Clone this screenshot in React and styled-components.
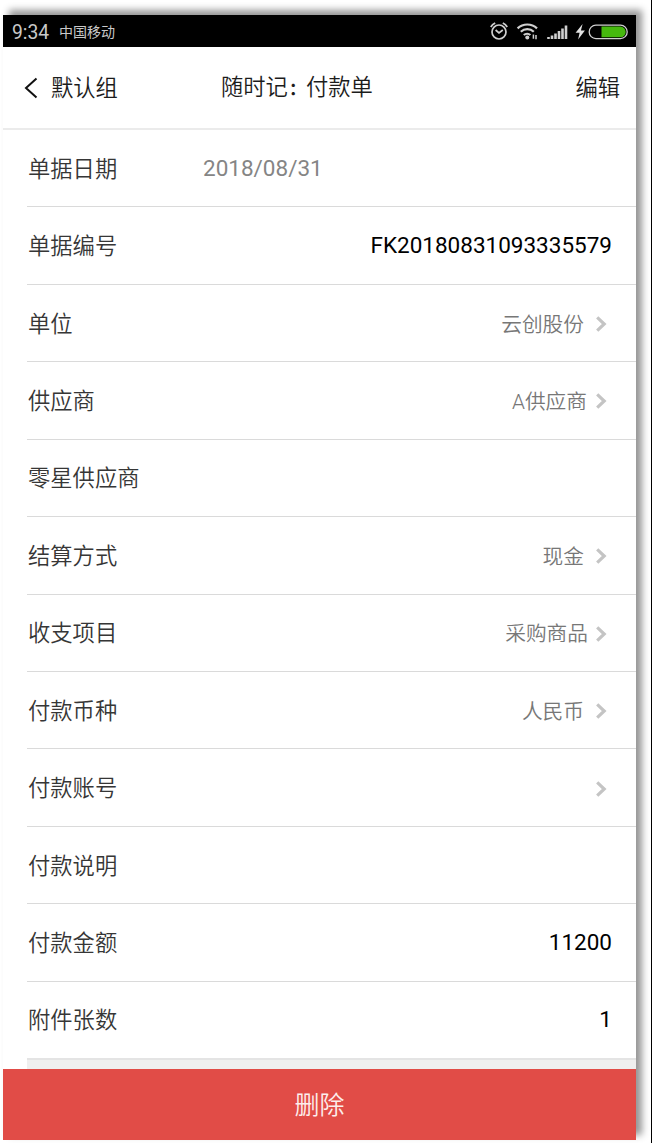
import React from 'react';
import styled, { createGlobalStyle } from 'styled-components';

const GlobalStyle = createGlobalStyle`
  body {
    margin: 0;
    background: #fff;
  }
  * {
    box-sizing: border-box;
  }
`

const Page = styled.div`
  width: 652px;
  height: 1143px;
  padding: 15px 0 0 3px;
  border-right: 1px solid #000;
  overflow: hidden;
  font-family: Roboto, "Noto Sans CJK SC", sans-serif;
`

const Phone = styled.div`
  display: flex;
  flex-direction: column;
  width: 633px;
  height: 1125px;
  background: #fff;
  box-shadow: 6px -5px 7px #969696;
`

const StatusBar = styled.div`
  display: flex;
  align-items: center;
  height: 32px;
  padding: 2px 7px 0 9px;
  background: #000;
  color: #c9c9c9;
`

const Time = styled.span`
  width: 47px;
  padding-top: 1px;
  font-size: 19.3px;
  line-height: 28px;
`

const Carrier = styled.span`
  flex: 1;
  font-size: 14px;
  line-height: 28px;
`

const StatusIcons = styled.svg`
  display: block;
  width: 142px;
  height: 24px;
  margin-bottom: 2px;
`

const Header = styled.div`
  display: grid;
  grid-template-columns: 198px 1fr auto;
  align-items: center;
  height: 83px;
  padding: 0 16px 0 20px;
  border-bottom: 2px solid #ebebeb;
  color: #1c1c1c;
  font-size: 22.3px;
  font-weight: 350;
  line-height: 32px;
`

const Back = styled.div`
  display: flex;
  align-items: center;
  padding-top: 1px;

  svg {
    margin-right: 12px;
  }
`

const Colon = styled.span`
  padding-left: 1px;
  font-size: 17px;
  font-weight: 700;
`

const List = styled.div`
  display: flex;
  flex-direction: column;
  height: 928px;
  padding-left: 24px;
`

const Row = styled.div`
  display: flex;
  flex: 1;
  align-items: center;
  padding-right: 24px;
  border-bottom: 1px solid #dadada;

  &:last-child {
    border-bottom: 0;
  }
`

const Label = styled.div`
  width: 176px;
  padding-top: 1px;
  padding-left: 1px;
  color: #363636;
  font-size: 22.3px;
  font-weight: 350;
  line-height: 32px;
`

const Value = styled.div`
  flex: 1;
  padding-right: ${props => props.$gap || 0}px;
  padding-bottom: 1px;
  color: #000;
  font-size: 22.5px;
  line-height: 32px;
  text-align: right;
`

const DateValue = styled(Value)`
  padding-bottom: 0;
  color: #858585;
  text-align: left;
`

const LinkValue = styled(Value)`
  padding-top: 3px;
  padding-bottom: 0;
  color: #777;
  font-size: 20.7px;
  font-weight: 350;
`

const Arrow = styled.svg`
  display: block;
  width: 12px;
  height: 18px;
  margin: 2px 5px 0 0;
`

const Spacer = styled.div`
  height: 11px;
  margin-left: 24px;
  background: #efefef;
  border-top: 2px solid #e4e4e4;
`

const DeleteButton = styled.button`
  height: 71px;
  padding: 2px 0 0;
  border: 0;
  background: #e14c47;
  color: #fdeeed;
  font-family: inherit;
  font-size: 25px;
  font-weight: 350;
  line-height: 36px;
`

const rows = [
  { label: '单据日期', value: '2018/08/31', type: 'date' },
  { label: '单据编号', value: 'FK20180831093335579' },
  { label: '单位', value: '云创股份', type: 'link', gap: 11 },
  { label: '供应商', value: 'A供应商', type: 'link', gap: 8 },
  { label: '零星供应商', value: '' },
  { label: '结算方式', value: '现金', type: 'link', gap: 11 },
  { label: '收支项目', value: '采购商品', type: 'link', gap: 7 },
  { label: '付款币种', value: '人民币', type: 'link', gap: 11 },
  { label: '付款账号', value: '', type: 'link' },
  { label: '付款说明', value: '' },
  { label: '付款金额', value: '11200' },
  { label: '附件张数', value: '1' }
]

const StatusGlyphs = () => (
  <StatusIcons viewBox="0 0 142 24" fill="none" stroke="#d0d0d0">
    {/* alarm */}
    <circle cx="12" cy="13" r="7" strokeWidth="1.7" />
    <path d="M8.6 11l3.4 3 3.8-3" strokeWidth="1.7" />
    <path d="M3.8 8a10 10 0 0 1 4.4-4M20.2 8a10 10 0 0 0-4.4-4" strokeWidth="1.8" />
    {/* wifi */}
    <path d="M30.6 9.4a14 14 0 0 1 19.4 0M33.8 12.8a9.4 9.4 0 0 1 13 0M36.8 16a5 5 0 0 1 6.6 0" strokeWidth="2.2" />
    <circle cx="40.3" cy="18.6" r="2" fill="#d0d0d0" stroke="none" />
    <path d="M46.4 15.5v4.2M49 16v4.2" strokeWidth="1.5" />
    {/* signal */}
    <path d="M61.5 18v2M65 16.6v3.4M68.5 14.4v5.6M72 12v8M75.5 9.6v10.4M79 6.6v13.4" strokeWidth="2.6" />
    {/* charging */}
    <path d="M95.6 5l-7 8.8h4l-1.5 6.6 6.8-8.8h-4z" fill="#e2e2e2" stroke="none" />
    <rect x="102.2" y="6.2" width="38" height="13.4" rx="6.7" strokeWidth="1.3" />
    <path d="M114.5 7.6h18.9a5.3 5.3 0 0 1 0 10.6h-18.9z" fill="#46b90e" stroke="none" />
  </StatusIcons>
)

const FormRow = ({ label, value, type, gap }) => (
  <Row>
    <Label>{label}</Label>
    {type === 'date' && <DateValue>{value}</DateValue>}
    {type === 'link' && <LinkValue $gap={gap}>{value}</LinkValue>}
    {!type && <Value>{value}</Value>}
    {type === 'link' && (
      <Arrow viewBox="0 0 12 18" fill="none" stroke="#c4c4c4" strokeWidth="3.2">
        <path d="M2.2 2.4l7 6.6-7 6.6" />
      </Arrow>
    )}
  </Row>
)

const App = () => {
  return (
    <Page>
      <GlobalStyle />
      <Phone>
        <StatusBar>
          <Time>9:34</Time>
          <Carrier>中国移动</Carrier>
          <StatusGlyphs />
        </StatusBar>
        <Header>
          <Back>
            <svg width="16" height="22" viewBox="0 0 16 22" fill="none" stroke="#111" strokeWidth="2">
              <path d="M13.5 1.5L3 11l10.5 9.5" />
            </svg>
            默认组
          </Back>
          <div>随时记<Colon>：</Colon>付款单</div>
          <div>编辑</div>
        </Header>
        <List>
          {rows.map(row => <FormRow key={row.label} {...row} />)}
        </List>
        <Spacer />
        <DeleteButton>删除</DeleteButton>
      </Phone>
    </Page>
  )
}

export default App;
